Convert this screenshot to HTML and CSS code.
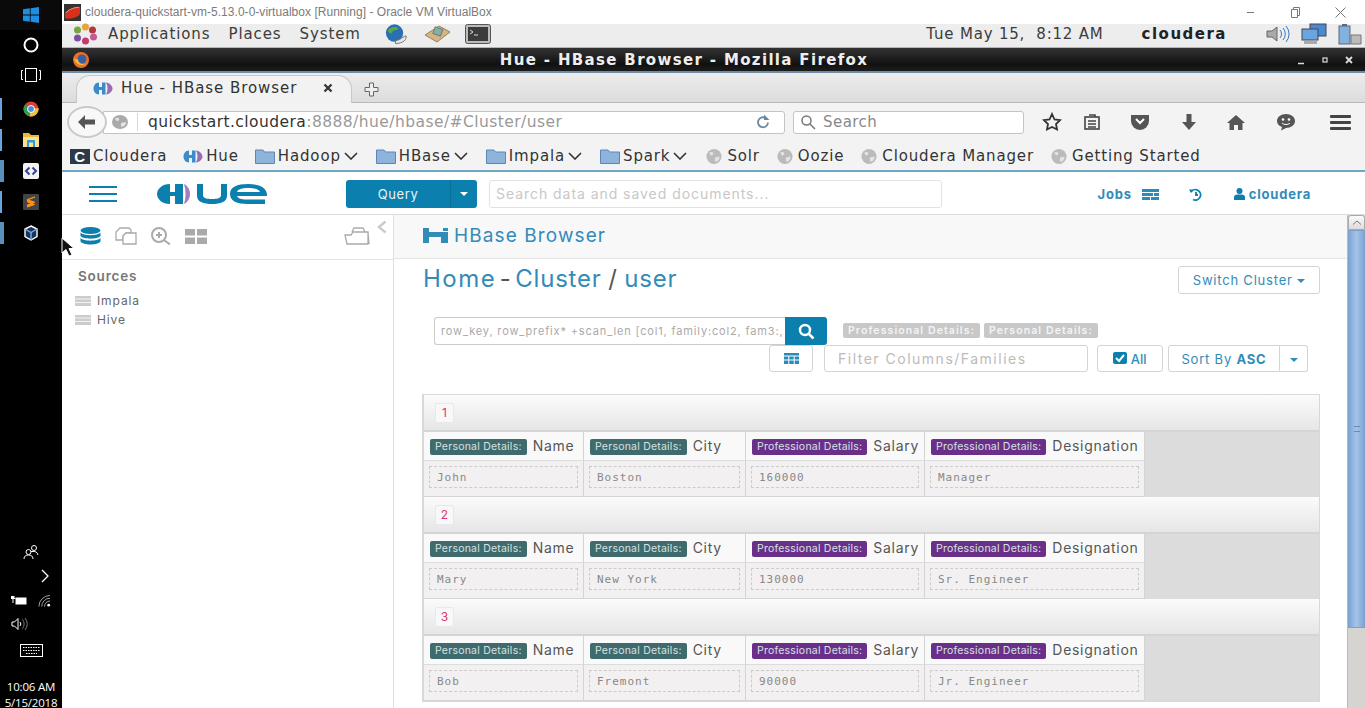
FILE: index.html
```html
<!DOCTYPE html>
<html lang="en">
<head>
  <meta charset="UTF-8">
  <title>Hue - HBase Browser</title>
  <link rel="stylesheet" href="styles.css">
</head>
<body>
  <aside class="taskbar">
    <div class="start">
      <svg width="16" height="16" viewBox="0 0 16 16"><path fill="#1e8ee0" d="M0 2.300 6.800 1.300V7.500H0zM7.600 1.200 16 0V7.500H7.600zM0 8.400H6.800V14.700L0 13.700zM7.600 8.400H16V16L7.600 14.800z"/></svg>
    </div>
    <div class="tb-icon">
      <svg width="16" height="16" viewBox="0 0 16 16"><circle cx="8" cy="8" r="6.500" fill="none" stroke="#fff" stroke-width="2"/></svg>
    </div>
    <div class="tb-icon">
      <svg width="22" height="16" viewBox="0 0 22 16" fill="none" stroke="#fff"><rect x="5.500" y="1.500" width="11" height="13"/><path d="M3 3.500H1.500V12.500H3M19 3.500H20.500V12.500H19"/></svg>
    </div>
    <div class="tb-icon running first-app">
      <svg width="16" height="16" viewBox="0 0 16 16"><circle cx="8" cy="8" r="7.500" fill="#d9402f"/><path d="M8 8 1.500 4.200A7.500 7.500 0 0 0 6.500 15.300z" fill="#2e9e4a"/><path d="M8 8 15.500 7A7.500 7.500 0 0 1 6.500 15.300z" fill="#f3c22d"/><circle cx="8" cy="8" r="3.500" fill="#4b8fe0" stroke="#fff"/></svg>
    </div>
    <div class="tb-icon running">
      <svg width="16" height="16" viewBox="0 0 16 16"><path fill="#e8b93e" d="M0 1H6L8 3H16V5H0z"/><path fill="#fbe18c" d="M0 5H16V15H0z"/><path fill="#2e9be0" d="M4 8H12V15H10V10.500H6V15H4z"/></svg>
    </div>
    <div class="tb-icon running wide">
      <svg width="16" height="16" viewBox="0 0 16 16"><rect width="16" height="16" rx="2" fill="#f2f2f2"/><path d="M6.500 4.500 3 8 6.500 11.500M9.500 4.500 13 8 9.500 11.500" fill="none" stroke="#3b3f9e" stroke-width="2"/></svg>
    </div>
    <div class="tb-icon running">
      <svg width="16" height="16" viewBox="0 0 16 16"><rect width="16" height="16" rx="1" fill="#444"/><path d="M12 3 4.500 5.500V8L11.500 10.500 4.500 13V10.800L11.500 8.500V8L4.500 5.800z" fill="#f7931e" stroke="#f7931e"/></svg>
    </div>
    <div class="tb-icon running wide">
      <svg width="14" height="16" viewBox="0 0 14 16" fill="#17325e" stroke="#fff" stroke-width="1.400"><path d="M7 1 13 4V11.500L7 15 1 11.500V4z"/><path d="M1 4 7 7.500 13 4M7 7.500V15" fill="none" stroke="#7fb0e8"/></svg>
    </div>
    <div class="tray">
      <svg class="tray-people" width="16" height="16" viewBox="0 0 16 16" fill="none" stroke="#fff"><circle cx="5.500" cy="8" r="2.500"/><circle cx="11" cy="4" r="2.500"/><path d="M1 15C1 12 3 11 5.500 11S10 12 10 15M8 7.500 9 7.500C12 7 14.500 8 15 11"/></svg>
      <svg class="tray-chevron" width="10" height="14" viewBox="0 0 10 14" fill="none" stroke="#fff" stroke-width="1.300"><path d="M2 1 8 7 2 13"/></svg>
      <div class="tray-pair">
        <svg width="16" height="12" viewBox="0 0 16 12"><path d="M0 1H3.500V3H4.500V4H2.500V8H1.500V4H0z" fill="#fff"/><rect x="4.500" y="2.500" width="11" height="7" fill="#fff"/></svg>
        <svg width="13" height="14" viewBox="0 0 14 14" fill="none" stroke="#aaa"><path d="M1 13A12 12 0 0 1 13 1M4 13A9 9 0 0 1 13 4M7 13A6 6 0 0 1 13 7"/><circle cx="11.500" cy="11.500" r="1.500" fill="#fff" stroke="none"/></svg>
      </div>
      <svg class="tray-sound" width="17" height="14" viewBox="0 0 17 14" fill="none" stroke="#fff"><path d="M1 5H3.500L7 1.500V12.500L3.500 9H1z"/><path d="M9 5A3 3 0 0 1 9 9"/><path d="M11.500 2.500A7 7 0 0 1 11.500 11.500M14 1A10 10 0 0 1 14 13" stroke="#777"/></svg>
      <svg class="tray-keyboard" width="23" height="13" viewBox="0 0 23 13" fill="none" stroke="#fff"><rect x=".5" y=".5" width="22" height="12"/><path d="M3 3.500H20M3 6.500H20M6 9.500H17" stroke-dasharray="1.500 1"/></svg>
      <div class="clock">10:06 AM<br>5/15/2018</div>
    </div>
  </aside>

  <div class="vm">
    <div class="vm-title">
      <svg width="17" height="17" viewBox="0 0 17 17"><rect width="17" height="17" fill="#333"/><path d="M1 10C1 6 12 2 16 3V9C16 13 5 16 1 14z" fill="#d9301e"/><path d="M2 9C5 5 12 3 15 3.500" stroke="#f59a7a" fill="none"/></svg>
      <span>cloudera-quickstart-vm-5.13.0-0-virtualbox [Running] - Oracle VM VirtualBox</span>
      <div class="vm-buttons">
        <svg width="10" height="10" viewBox="0 0 10 10" stroke="#777"><path d="M2 5.500H9"/></svg>
        <svg width="10" height="11" viewBox="0 0 10 11" fill="none" stroke="#777"><path d="M1.500 2.500H7.500V10.500H1.500zM3.500 2.500V.5H9.500V8.500H7.500"/></svg>
        <svg width="11" height="11" viewBox="0 0 11 11" stroke="#777"><path d="M.5.5 10.500 10.500M10.500.5.5 10.500"/></svg>
      </div>
    </div>

    <div class="gnome-panel">
      <svg width="27" height="22" viewBox="0 0 26 22">
        <circle cx="13" cy="4" r="3.500" fill="#e8a33d"/><circle cx="20" cy="7" r="3.500" fill="#b33a3a"/><circle cx="21" cy="14" r="3.500" fill="#c25a9a"/><circle cx="13" cy="18" r="3.500" fill="#c23b6a"/><circle cx="5" cy="15" r="3.500" fill="#7a4fa3"/><circle cx="5" cy="7" r="3.500" fill="#7aa53d"/>
      </svg>
      <span class="panel-item">Applications</span>
      <span class="panel-item">Places</span>
      <span class="panel-item">System</span>
      <svg class="launcher" width="27" height="22" viewBox="0 0 28 22"><circle cx="13" cy="10" r="9" fill="#2a6fb0"/><path d="M6 7C9 3 15 3 17 5 15 8 12 6 10 10 8 11 7 9 6 7z" fill="#5aa848"/><path d="M14 21C18 21 26 19 25 13 22 13 20 17 14 18z" fill="#e6e6e6" stroke="#777"/></svg>
      <svg class="launcher" width="28" height="22" viewBox="0 0 28 22"><path d="M2 12 16 3 27 9 14 19z" fill="#d4b483" stroke="#9a8257"/><rect x="11" y="5" width="8" height="7" fill="#7fb2a5" stroke="#777" transform="rotate(20 15 8)"/></svg>
      <svg class="launcher" width="26" height="20" viewBox="0 0 26 20"><rect x=".5" y=".5" width="25" height="19" rx="2" fill="#bbb" stroke="#555"/><rect x="3" y="3" width="20" height="14" fill="#3c3c3c"/><path d="M5 6 8 8 5 10M9 11H13" stroke="#ddd" fill="none"/></svg>
      <span class="panel-clock">Tue May 15,&nbsp; 8:12 AM</span>
      <span class="panel-user">cloudera</span>
      <svg width="30" height="20" viewBox="0 0 30 20" fill="none"><path d="M3 7H8L13 3V17L8 13H3z" fill="#aaa" stroke="#666"/><path d="M16 6A6 6 0 0 1 16 14M19 4A9 9 0 0 1 19 16M22 2A12 12 0 0 1 22 18" stroke="#3a78c2"/></svg>
      <svg class="panel-net" width="28" height="22" viewBox="0 0 28 22"><rect x="10" y="1" width="16" height="12" fill="#4a8bd0" stroke="#445"/><rect x="2" y="6" width="16" height="11" fill="#6aa5e0" stroke="#445"/><rect x="4" y="18" width="13" height="3" fill="#aaa"/></svg>
      <svg class="panel-batt" width="26" height="22" viewBox="0 0 26 22"><rect x="2" y="3" width="11" height="18" fill="#7fb2e0" stroke="#667"/><rect x="5" y="1" width="5" height="2" fill="#667"/><path d="M14 12H24V21H14z" fill="#bbb" stroke="#777"/></svg>
    </div>

    <div class="ff-title">
      <svg width="18" height="18" viewBox="0 0 18 18"><circle cx="9" cy="9" r="8" fill="#e8702a"/><circle cx="10" cy="8" r="4.500" fill="#3a5f9e"/><path d="M2 7C3 13 9 16 14 13 10 14 6 12 6 8 4 9 3 8 2 7z" fill="#f6b73c"/></svg>
      <span class="ff-name">Hue - HBase Browser - Mozilla Firefox</span>
      <div class="ff-buttons">
        <svg width="10" height="10" viewBox="0 0 10 10"><path d="M2 8.500H8" stroke="#ddd" stroke-width="1.500"/></svg>
        <svg width="10" height="10" viewBox="0 0 10 10"><rect x="3" y="3" width="4" height="4" fill="none" stroke="#ddd" stroke-width="1.200"/></svg>
        <svg width="10" height="10" viewBox="0 0 10 10"><path d="M2 2 8 8M8 2 2 8" stroke="#ddd" stroke-width="1.800"/></svg>
      </div>
    </div>

    <div class="ff-tabs">
      <div class="tab">
        <svg class="hue-mark" width="20" height="13" viewBox="0 0 20 13"><path d="M6 .5C2.500.5.5 3.500.5 6.500S2.500 12.500 6 12.500V.5z" fill="#3a8ccc"/><path d="M6 5H9V8H6zM9 .5H12.500V12.500H9z" fill="#3a8ccc"/><path d="M13 .5C17 1 19.500 4 19.500 6.500S17 12 13 12.500C15 9 15 4 13 .5z" fill="#9a6cb5"/></svg>
        <span>Hue - HBase Browser</span>
        <svg class="tab-close" width="10" height="10" viewBox="0 0 10 10"><path d="M1.500 1.500 8.500 8.500M8.500 1.500 1.500 8.500" stroke="#333" stroke-width="2.200"/></svg>
      </div>
      <svg class="new-tab" width="15" height="15" viewBox="0 0 15 15"><path d="M5.500 1H9.500V5.500H14V9.500H9.500V14H5.500V9.500H1V5.500H5.500z" fill="#eee" stroke="#666"/></svg>
    </div>

    <div class="ff-nav">
      <div class="back-btn">
        <svg width="20" height="16" viewBox="0 0 20 16"><path d="M8 1 1 8 8 15V10.500H18V5.500H8z" fill="#555"/></svg>
      </div>
      <div class="urlbar">
        <svg width="18" height="16" viewBox="0 0 18 18" preserveAspectRatio="none"><circle cx="9" cy="9" r="8" fill="#aaa"/><path d="M4 5C7 3 9 5 8 7 6 9 5 7 4 5zM10 10 15 9C15 13 12 15 10 14z" fill="#e4e4e4"/></svg>
        <span class="url"><span class="url-host">quickstart.cloudera</span>:8888/hue/hbase/#Cluster/user</span>
        <svg class="reload" width="16" height="16" viewBox="0 0 16 16" fill="none" stroke="#6c86a0" stroke-width="1.800"><path d="M13 8.500A5 5 0 1 1 9.500 3.500"/><path d="M9 .5V6H14.500z" fill="#6c86a0" stroke="none"/></svg>
      </div>
      <div class="ff-search">
        <svg width="16" height="16" viewBox="0 0 16 16" fill="none" stroke="#777" stroke-width="1.500"><circle cx="6.500" cy="6.500" r="4.500"/><path d="M10 10 15 15"/></svg>
        <span>Search</span>
      </div>
      <div class="nav-icons">
        <svg class="nav-star" width="20" height="20" viewBox="0 0 20 20" fill="none" stroke="#333" stroke-width="1.800"><path d="M10 2 12.500 7.500 18 8.200 14 12 15 17.500 10 15 5 17.500 6 12 2 8.200 7.500 7.500z"/></svg>
        <svg class="nav-clip" width="18" height="18" viewBox="0 0 18 18" fill="none" stroke="#444" stroke-width="1.600"><rect x="2" y="4" width="14" height="12"/><path d="M6 2H12V4M5 8H13M5 11H13M5 14H13"/></svg>
        <svg width="22" height="18" viewBox="0 0 20 18"><path d="M1 2H19V8A9 9 0 0 1 1 8z" fill="#555"/><path d="M6 6 10 10 14 6" fill="none" stroke="#fff" stroke-width="2"/></svg>
        <svg width="18" height="18" viewBox="0 0 18 18"><path d="M6.500 1H11.500V9H16L9 17 2 9H6.500z" fill="#555"/></svg>
        <svg width="20" height="18" viewBox="0 0 18 18"><path d="M9 2 18 10H15.500V17H11V12H7V17H2.500V10H0z" fill="#555"/></svg>
        <svg width="22" height="18" viewBox="0 0 20 18"><path d="M10 1C15 1 19 4 19 8S15 15 10 15L5 17.500 6 14C3 13 1 11 1 8 1 4 5 1 10 1z" fill="#555"/><circle cx="7" cy="6.500" r="1.300" fill="#fff"/><circle cx="13" cy="6.500" r="1.300" fill="#fff"/><path d="M6 10C8 12 12 12 14 10" stroke="#fff" fill="none"/></svg>
      </div>
      <div class="menu-btn"><i></i><i></i><i></i></div>
    </div>

    <div class="ff-bookmarks">
      <span class="bm"><b class="bm-c">C</b>Cloudera</span>
      <span class="bm"><svg width="20" height="13" viewBox="0 0 20 13"><path d="M6 .5C2.500.5.5 3.500.5 6.500S2.500 12.500 6 12.500V.5z" fill="#3a8ccc"/><path d="M6 5H9V8H6zM9 .5H12.500V12.500H9z" fill="#3a8ccc"/><path d="M13 .5C17 1 19.500 4 19.500 6.500S17 12 13 12.500C15 9 15 4 13 .5z" fill="#9a6cb5"/></svg>Hue</span>
      <span class="bm"><svg class="folder" viewBox="0 0 20 16"><path d="M.5 2H8L9.500 4H19.500V15.500H.5z" fill="#8fb4dc" stroke="#5d86b3"/></svg>Hadoop<svg class="chev" viewBox="0 0 14 8"><path d="M1 1 7 7 13 1" fill="none" stroke="#333" stroke-width="1.600"/></svg></span>
      <span class="bm"><svg class="folder" viewBox="0 0 20 16"><path d="M.5 2H8L9.500 4H19.500V15.500H.5z" fill="#8fb4dc" stroke="#5d86b3"/></svg>HBase<svg class="chev" viewBox="0 0 14 8"><path d="M1 1 7 7 13 1" fill="none" stroke="#333" stroke-width="1.600"/></svg></span>
      <span class="bm"><svg class="folder" viewBox="0 0 20 16"><path d="M.5 2H8L9.500 4H19.500V15.500H.5z" fill="#8fb4dc" stroke="#5d86b3"/></svg>Impala<svg class="chev" viewBox="0 0 14 8"><path d="M1 1 7 7 13 1" fill="none" stroke="#333" stroke-width="1.600"/></svg></span>
      <span class="bm"><svg class="folder" viewBox="0 0 20 16"><path d="M.5 2H8L9.500 4H19.500V15.500H.5z" fill="#8fb4dc" stroke="#5d86b3"/></svg>Spark<svg class="chev" viewBox="0 0 14 8"><path d="M1 1 7 7 13 1" fill="none" stroke="#333" stroke-width="1.600"/></svg></span>
      <span class="bm"><svg class="globe" viewBox="0 0 18 18"><circle cx="9" cy="9" r="8" fill="#bbb"/><path d="M4 5C7 3 9 5 8 7 6 9 5 7 4 5zM10 10 15 9C15 13 12 15 10 14z" fill="#e4e4e4"/></svg>Solr</span>
      <span class="bm"><svg class="globe" viewBox="0 0 18 18"><circle cx="9" cy="9" r="8" fill="#bbb"/><path d="M4 5C7 3 9 5 8 7 6 9 5 7 4 5zM10 10 15 9C15 13 12 15 10 14z" fill="#e4e4e4"/></svg>Oozie</span>
      <span class="bm"><svg class="globe" viewBox="0 0 18 18"><circle cx="9" cy="9" r="8" fill="#bbb"/><path d="M4 5C7 3 9 5 8 7 6 9 5 7 4 5zM10 10 15 9C15 13 12 15 10 14z" fill="#e4e4e4"/></svg>Cloudera Manager</span>
      <span class="bm"><svg class="globe" viewBox="0 0 18 18"><circle cx="9" cy="9" r="8" fill="#bbb"/><path d="M4 5C7 3 9 5 8 7 6 9 5 7 4 5zM10 10 15 9C15 13 12 15 10 14z" fill="#e4e4e4"/></svg>Getting Started</span>
    </div>

    <header class="hue-nav">
      <div class="hamburger"><i></i><i></i><i></i></div>
      <svg class="hue-logo" width="110" height="22" viewBox="0 0 110 22">
        <path d="M13 1C5 1 0 6 0 11S5 21 13 21z" fill="#0b7fad"/>
        <path d="M13 9H18V13H13zM18 1H26V21H18z" fill="#0b7fad"/>
        <path d="M27 1C31 3 33 7 33 11S31 19 27 21C29 15 29 7 27 1z" fill="#a87bc0"/>
        <path d="M40 1H46V12C46 15.500 50 16 55 16S64 15.500 64 12V1H70V13C70 19 63 21 55 21S40 19 40 13z" fill="#0b7fad"/>
        <path d="M91 1C103 1 110 5 110 12V13H80C81 16 86 16.500 92 16.500H108V21H91C80 21 73 18 73 11S80 1 91 1zM80 9H103C102 6 97 5 91 5S81 6 80 9z" fill="#0b7fad"/>
      </svg>
      <div class="query-btn"><span class="query-label">Query</span><span class="query-caret"><i class="caret"></i></span></div>
      <div class="global-search">Search data and saved documents...</div>
      <div class="hue-right">
        <span class="jobs">Jobs
          <svg width="17" height="11" viewBox="0 0 17 11" fill="#2a8ab8"><path d="M0 0H17V3H0zM0 4H11V7H0zM12 4H17V7H12zM0 8H8V11H0zM9 8H17V11H9z"/></svg>
        </span>
        <svg class="history" width="15" height="13" viewBox="0 0 15 13" fill="none" stroke="#0b7fad" stroke-width="1.800"><path d="M3 4A5.200 5.200 0 1 1 5 11.500"/><path d="M1 1.500 5 1.500 3 5z" fill="#0b7fad" stroke="none"/><path d="M8 4V7H10"/></svg>
        <span class="user"><svg width="11" height="12" viewBox="0 0 11 12" fill="#0b7fad"><circle cx="5.500" cy="3" r="3"/><path d="M0 12V9C0 7 2 6.500 5.500 6.500S11 7 11 9V12z"/></svg> cloudera</span>
      </div>
    </header>

    <div class="hue-body">
      <nav class="assist">
        <div class="assist-tabs">
          <svg width="21" height="18" viewBox="0 0 21 18" fill="#0b7fad"><ellipse cx="10.500" cy="3.500" rx="10" ry="3.500"/><path d="M.5 5.500C3 9 18 9 20.500 5.500V9C18 12.500 3 12.500.5 9zM.5 11C3 14.500 18 14.500 20.500 11V14.500C18 18.500 3 18.500.5 14.500z"/></svg>
          <svg width="23" height="18" viewBox="0 0 23 18" fill="none" stroke="#aaa" stroke-width="1.300"><path d="M6 1H15L17 3V6H12L9 9V13H2V5z"/><path d="M12 6H22V17H9V9z" fill="#fff"/></svg>
          <svg width="22" height="18" viewBox="0 0 22 18" fill="none" stroke="#aaa" stroke-width="2"><circle cx="9" cy="8" r="7"/><path d="M14 13 20 17.500M9 5V11M6 8H12"/></svg>
          <svg width="22" height="15" viewBox="0 0 22 15" fill="#aaa"><path d="M0 0H10V6.500H0zM12 0H22V6.500H12zM0 8.500H10V15H0zM12 8.500H22V15H12z"/></svg>
          <svg class="assist-folder" width="26" height="18" viewBox="0 0 26 18" fill="none" stroke="#aaa" stroke-width="1.300"><path d="M3 17 1 8H7L9 5H15L24 5V17zM8 5 10 1H19L21 5M24 5 25 17"/></svg>
        </div>
        <svg class="assist-collapse" width="10" height="14" viewBox="0 0 10 14" fill="none" stroke="#ccc" stroke-width="2.500"><path d="M8.500 1.500 2 7 8.500 12.500"/></svg>
        <div class="sources">
          <h3>Sources</h3>
          <div class="source"><svg class="db" viewBox="0 0 16 10"><path d="M0 0H16V10H0z" fill="#ccc"/><path d="M0 3H16M0 6.500H16" stroke="#f4f4f4"/></svg>Impala</div>
          <div class="source"><svg class="db" viewBox="0 0 16 10"><path d="M0 0H16V10H0z" fill="#ccc"/><path d="M0 3H16M0 6.500H16" stroke="#f4f4f4"/></svg>Hive</div>
        </div>
      </nav>

      <main class="content">
        <div class="app-header">
          <svg width="25" height="15" viewBox="0 0 25 15" fill="#338bb8"><path d="M0 0H6V4H25V15H18V9H6V15H0zM20 0H25V3H20z"/></svg>
          <span>HBase Browser</span>
        </div>
        <div class="page">
          <div class="page-head">
            <h1><a class="home">Home</a> <em class="dash">-</em> <a>Cluster</a> <em class="slash">/</em> <a>user</a></h1>
            <button class="btn switch">Switch Cluster <i class="caret blue"></i></button>
          </div>

          <div class="search-row">
            <div class="row-search">row_key, row_prefix* +scan_len [col1, family:col2, fam3:,</div>
            <div class="row-search-btn">
              <svg width="17" height="17" viewBox="0 0 17 17" fill="none" stroke="#fff" stroke-width="2.500"><circle cx="7" cy="7" r="5"/><path d="M11 11 15.500 15.500"/></svg>
            </div>
            <div class="fam-tags"><span>Professional Details:</span><span>Personal Details:</span></div>
          </div>

          <div class="tool-row">
            <button class="btn grid-btn">
              <svg width="15" height="11" viewBox="0 0 15 11" fill="#2a8ab8"><path d="M0 0H15V2.500H0zM0 3.500H4.300V6.500H0zM5.300 3.500H9.700V6.500H5.300zM10.700 3.500H15V6.500H10.700zM0 7.500H4.300V11H0zM5.300 7.500H9.700V11H5.300zM10.700 7.500H15V11H10.700z"/></svg>
            </button>
            <div class="filter">Filter Columns/Families</div>
            <button class="btn all"><svg width="14" height="12" viewBox="0 0 14 12"><rect width="14" height="12" rx="2" fill="#0b7fad"/><path d="M3 6 6 9 11 3" fill="none" stroke="#fff" stroke-width="2"/></svg> All</button>
            <div class="split">
              <button class="btn sort">Sort By <b>ASC</b></button>
              <button class="btn sort-caret"><i class="caret blue"></i></button>
            </div>
          </div>

          <section class="results">
            <div class="row-head"><span class="row-key">1</span></div>
            <div class="cells">
              <div class="cell"><div class="cell-name"><span class="tag personal">Personal Details:</span> <span class="qual">Name</span></div><div class="cell-val"><span>John</span></div></div>
              <div class="cell"><div class="cell-name"><span class="tag personal">Personal Details:</span> <span class="qual">City</span></div><div class="cell-val"><span>Boston</span></div></div>
              <div class="cell"><div class="cell-name"><span class="tag pro">Professional Details:</span> <span class="qual">Salary</span></div><div class="cell-val"><span>160000</span></div></div>
              <div class="cell"><div class="cell-name"><span class="tag pro">Professional Details:</span> <span class="qual">Designation</span></div><div class="cell-val"><span>Manager</span></div></div>
            </div>
            <div class="row-head"><span class="row-key">2</span></div>
            <div class="cells">
              <div class="cell"><div class="cell-name"><span class="tag personal">Personal Details:</span> <span class="qual">Name</span></div><div class="cell-val"><span>Mary</span></div></div>
              <div class="cell"><div class="cell-name"><span class="tag personal">Personal Details:</span> <span class="qual">City</span></div><div class="cell-val"><span>New York</span></div></div>
              <div class="cell"><div class="cell-name"><span class="tag pro">Professional Details:</span> <span class="qual">Salary</span></div><div class="cell-val"><span>130000</span></div></div>
              <div class="cell"><div class="cell-name"><span class="tag pro">Professional Details:</span> <span class="qual">Designation</span></div><div class="cell-val"><span>Sr. Engineer</span></div></div>
            </div>
            <div class="row-head"><span class="row-key">3</span></div>
            <div class="cells">
              <div class="cell"><div class="cell-name"><span class="tag personal">Personal Details:</span> <span class="qual">Name</span></div><div class="cell-val"><span>Bob</span></div></div>
              <div class="cell"><div class="cell-name"><span class="tag personal">Personal Details:</span> <span class="qual">City</span></div><div class="cell-val"><span>Fremont</span></div></div>
              <div class="cell"><div class="cell-name"><span class="tag pro">Professional Details:</span> <span class="qual">Salary</span></div><div class="cell-val"><span>90000</span></div></div>
              <div class="cell"><div class="cell-name"><span class="tag pro">Professional Details:</span> <span class="qual">Designation</span></div><div class="cell-val"><span>Jr. Engineer</span></div></div>
            </div>
          </section>
        </div>
        <div class="scrollbar">
          <div class="scroll-up"><svg width="10" height="5" viewBox="0 0 10 5" fill="none" stroke="#777"><path d="M1 4.500 5 1 9 4.500"/></svg></div>
          <div class="scroll-thumb"><i></i></div>
        </div>
      </main>
    </div>
  </div>

  <svg class="cursor" width="15" height="20" viewBox="0 0 15 20"><path d="M1 1V16L5 12.500 8 19 11 18 8 11.500H13z" fill="#111" stroke="#fff"/></svg>
</body>
</html>
```
FILE: styles.css
```css
* {
  box-sizing: border-box;
}
html, body {
  margin: 0;
  height: 708px;
  overflow: hidden;
}
body {
  display: flex;
  font-family: "DejaVu Sans", sans-serif;
  background: #fff;
  color: #333;
}

/* windows taskbar */
.taskbar {
  width: 62px;
  flex: none;
  background: #000;
  display: flex;
  flex-direction: column;
  align-items: center;
}
.start {
  width: 100%;
  height: 30px;
  background: #0a0a0a;
  display: flex;
  align-items: center;
  justify-content: center;
}
.tb-icon {
  width: 100%;
  height: 30px;
  display: flex;
  align-items: center;
  justify-content: center;
  position: relative;
}
.tb-icon.running {
  height: 31px;
}
.tb-icon.first-app {
  margin-top: 3px;
}
.tb-icon.running::before {
  content: "";
  position: absolute;
  left: 0;
  top: 5px;
  bottom: 4px;
  width: 2px;
  background: #6aa6dd;
}
.tb-icon.wide::before {
  width: 4px;
  background: #5b8fc0;
}
.tray {
  margin-top: auto;
  width: 100%;
  display: flex;
  flex-direction: column;
  align-items: center;
}
.tray-people {
  margin-bottom: 9px;
}
.tray-chevron {
  margin-left: 27px;
  margin-bottom: 11px;
}
.tray-pair {
  display: flex;
  gap: 11px;
  align-items: center;
  height: 14px;
  margin-bottom: 9px;
}
.tray-sound {
  margin-right: 24px;
  margin-bottom: 13px;
}
.tray-keyboard {
  margin-bottom: 22px;
}
.clock {
  font: 11.500px/16px "Open Sans", sans-serif;
  letter-spacing: -.2px;
  color: #fff;
  text-align: center;
  white-space: nowrap;
  height: 29px;
}

/* vm window */
.vm {
  flex: 1;
  min-width: 0;
  display: flex;
  flex-direction: column;
}
.vm-title {
  height: 24px;
  display: flex;
  align-items: center;
  gap: 4px;
  padding: 0 19px 0 2px;
  font: 12px "Liberation Sans", sans-serif;
  color: #7b7b7b;
  letter-spacing: .03px;
}
.vm-buttons {
  margin-left: auto;
  display: flex;
  gap: 35px;
}
.gnome-panel {
  height: 24px;
  background: #ededed;
  border-bottom: 1px solid #b5b5b5;
  display: flex;
  align-items: center;
  padding: 0 2px 3px 10px;
  font-size: 15px;
  color: #3c3c3c;
}
.gnome-panel svg {
  flex: none;
}
.panel-item {
  margin-left: 18px;
  letter-spacing: .9px;
}
.panel-item:first-of-type {
  margin-left: 9px;
}
.launcher {
  margin-left: 14px;
}
.panel-item + .launcher {
  margin-left: 21px;
}
.panel-clock {
  margin-left: auto;
  letter-spacing: .8px;
}
.panel-user {
  margin-left: 38px;
  margin-right: 37px;
  font-weight: bold;
  color: #222;
  letter-spacing: 1.500px;
}
.panel-net {
  margin-left: 6px;
}
.panel-batt {
  margin-left: 9px;
}
.ff-title {
  height: 25px;
  background: linear-gradient(#333, #111 70%, #1c1c1c);
  border-bottom: 2px solid #6f8ba3;
  display: flex;
  align-items: center;
  padding: 0 11px 0 10px;
  position: relative;
  color: #eee;
}
.ff-name {
  flex: 1;
  text-align: center;
  font-size: 15px;
  font-weight: bold;
  letter-spacing: 1.340px;
  margin-left: -18px;
}
.ff-buttons {
  display: flex;
  gap: 14px;
}
.ff-tabs {
  height: 30px;
  background: linear-gradient(#ececec, #dcdcdc);
  border-bottom: 1px solid #b8b8b8;
  display: flex;
  align-items: flex-end;
  padding-left: 14px;
}
.tab {
  width: 276px;
  height: 28px;
  background: #f2f2f2;
  border: 1px solid #c8c8c8;
  border-bottom: 0;
  border-radius: 14px 14px 0 0;
  display: flex;
  align-items: center;
  padding: 0 18px 3px 16px;
  font-size: 15px;
  color: #333;
  letter-spacing: .95px;
  margin-bottom: -1px;
}
.hue-mark {
  margin-right: 8px;
}
.tab-close {
  margin-left: auto;
}
.new-tab {
  margin: 0 0 5px 12px;
}
.ff-nav {
  height: 39px;
  background: #f3f3f3;
  display: flex;
  align-items: center;
  padding: 0 14px 1px 5px;
}
.back-btn {
  width: 40px;
  height: 32px;
  border: 2px solid #c9c9c9;
  border-radius: 50%;
  background: #f8f8f8;
  display: flex;
  align-items: center;
  justify-content: center;
  margin-right: -4px;
  position: relative;
}
.urlbar {
  width: 682px;
  height: 23px;
  background: #fff;
  border: 1px solid #c4c4c4;
  border-radius: 0 3px 3px 0;
  display: flex;
  align-items: center;
  padding: 0 13px 0 7px;
  font-size: 15.500px;
  letter-spacing: .44px;
}
.url {
  color: #999;
  margin-left: 8px;
  padding-left: 10px;
  border-left: 1px solid #d6d6d6;
  line-height: 18px;
}
.url-host {
  color: #333;
}
.reload {
  margin-left: auto;
}
.ff-search {
  width: 231px;
  height: 23px;
  margin-left: 8px;
  background: #fff;
  border: 1px solid #c4c4c4;
  border-radius: 3px;
  display: flex;
  align-items: center;
  gap: 7px;
  padding-left: 6px;
  font-size: 15px;
  color: #888;
  letter-spacing: .45px;
}
.nav-icons {
  display: flex;
  align-items: center;
  gap: 28.500px;
  margin-left: 18px;
}
.nav-star {
  margin-right: -8px;
}
.menu-btn {
  margin-left: auto;
  width: 21px;
  display: flex;
  flex-direction: column;
  gap: 3px;
}
.menu-btn i {
  height: 3px;
  background: #444;
  border-radius: 1px;
}
.ff-bookmarks {
  height: 30px;
  background: #f3f3f3;
  display: flex;
  align-items: center;
  gap: 16px;
  padding-left: 8px;
  font-size: 15px;
  letter-spacing: .85px;
  color: #333;
  border-bottom: 2px solid #6fa8c4;
}
.bm {
  display: flex;
  align-items: center;
  gap: 3px;
  white-space: nowrap;
}
.bm-c {
  width: 20px;
  height: 15px;
  background: #2b3a46;
  color: #fff;
  font: bold 15px/15px "Liberation Sans", sans-serif;
  text-align: center;
}
.folder {
  width: 20px;
  height: 16px;
}
.chev {
  width: 14px;
  height: 8px;
  margin-right: 2px;
}
.globe {
  width: 18px;
  height: 17px;
  margin-right: 1px;
}

/* hue */
.hue-nav {
  height: 43px;
  display: flex;
  align-items: center;
  border-bottom: 1px solid #dcdcdc;
  padding: 2px 0 0 27px;
  font-family: Inter, sans-serif;
}
.hamburger {
  width: 28px;
  display: flex;
  flex-direction: column;
  gap: 5px;
}
.hamburger i {
  height: 2px;
  background: #0b7fad;
}
.hue-logo {
  margin-left: 40px;
}
.query-btn {
  margin-left: 79px;
  width: 131px;
  height: 28px;
  background: #0b7fad;
  border-radius: 3px;
  display: flex;
  color: #fff;
  font-size: 13px;
  letter-spacing: .6px;
}
.query-label {
  flex: 1;
  text-align: center;
  line-height: 28px;
  opacity: .9;
}
.query-caret {
  width: 27px;
  border-left: 1px solid #0a6f96;
  display: flex;
  align-items: center;
  justify-content: center;
}
.caret {
  display: inline-block;
  border-left: 4px solid transparent;
  border-right: 4px solid transparent;
  border-top: 4px solid #fff;
  vertical-align: middle;
}
.caret.blue {
  border-top-color: #338bb8;
}
.global-search {
  margin-left: 12px;
  width: 453px;
  height: 28px;
  border: 1px solid #e2e2e2;
  border-radius: 3px;
  padding-left: 6px;
  font-size: 14px;
  line-height: 26px;
  color: #c8c8c8;
  letter-spacing: .95px;
}
.hue-right {
  margin-left: auto;
  margin-right: 54px;
  display: flex;
  align-items: center;
  font-size: 13px;
  font-weight: 700;
  color: #338bb8;
  letter-spacing: .8px;
}
.jobs {
  display: flex;
  align-items: center;
  gap: 10px;
}
.history {
  margin-left: 29px;
}
.user {
  margin-left: 31px;
  display: flex;
  align-items: center;
  gap: 4px;
}
.hue-body {
  flex: 1;
  min-height: 0;
  display: flex;
  font-family: Inter, sans-serif;
}
.assist {
  width: 332px;
  flex: none;
  border-right: 1px solid #e0e0e0;
  position: relative;
}
.assist-tabs {
  height: 45px;
  border-bottom: 1px solid #e4e4e4;
  display: flex;
  align-items: center;
  gap: 13px;
  padding: 0 23px 2px 18px;
}
.assist-folder {
  margin-left: auto;
}
.assist-collapse {
  position: absolute;
  top: 5px;
  right: 6px;
}
.sources {
  padding: 8px 0 0 13px;
}
.sources h3 {
  margin: 0 0 7px;
  font-size: 13.500px;
  font-weight: 600;
  color: #777;
  padding-left: 3px;
  letter-spacing: .8px;
}
.source {
  display: flex;
  align-items: center;
  gap: 6px;
  font-size: 12px;
  line-height: 19px;
  color: #666;
  letter-spacing: .9px;
}
.db {
  width: 16px;
  height: 10px;
}
.content {
  flex: 1;
  min-width: 0;
  position: relative;
  overflow: hidden;
}
.app-header {
  height: 44px;
  background: #f8f8f8;
  border-bottom: 1px solid #e4e4e4;
  display: flex;
  align-items: center;
  gap: 6px;
  padding: 0 0 2px 29px;
  font-size: 19px;
  letter-spacing: 1.100px;
  color: #338bb8;
}
.page {
  padding: 0 45px 0 29px;
}
.page-head {
  display: flex;
  align-items: center;
  justify-content: space-between;
  height: 38px;
  margin-bottom: 20px;
}
.page-head h1 {
  margin: 0;
  font-size: 24px;
  font-weight: 400;
  color: #338bb8;
  white-space: nowrap;
  letter-spacing: .8px;
  word-spacing: -3px;
}
.page-head em {
  font-style: normal;
  color: #555;
}
.page-head .home {
  letter-spacing: 1.500px;
}
.page-head .dash {
  margin: 0 -1px;
}
.page-head .slash {
  margin: 0 2px;
}
.btn {
  font-family: inherit;
  background: #fff;
  border: 1px solid #d4d4d4;
  border-radius: 3px;
  color: #338bb8;
  font-size: 13px;
  height: 28px;
  padding: 0;
}
.switch {
  width: 142px;
  margin-top: 3px;
  letter-spacing: .8px;
}
.search-row {
  display: flex;
  align-items: flex-start;
  padding-left: 11px;
  height: 28px;
}
.row-search {
  width: 351px;
  height: 28px;
  border: 1px solid #ccc;
  border-right: 0;
  border-radius: 3px 0 0 3px;
  padding-left: 6px;
  font-size: 11px;
  line-height: 27px;
  color: #aaa;
  white-space: nowrap;
  overflow: hidden;
  letter-spacing: .85px;
}
.row-search-btn {
  width: 42px;
  height: 28px;
  background: #0b7fad;
  border-radius: 0 3px 3px 0;
  display: flex;
  align-items: center;
  justify-content: center;
}
.fam-tags {
  display: flex;
  gap: 4px;
  margin: 6px 0 0 16px;
}
.fam-tags span {
  background: #c8c8c8;
  color: #f4f4f4;
  font-size: 10.500px;
  font-weight: 600;
  line-height: 15px;
  border-radius: 2px;
  padding: 0 5px;
  letter-spacing: 1.100px;
}
.tool-row {
  display: flex;
  height: 27px;
  gap: 9px;
  padding-left: 346px;
  margin-bottom: 22px;
}
.tool-row .btn {
  height: 27px;
}
.grid-btn {
  width: 44px;
  margin-right: 2px;
}
.filter {
  width: 264px;
  height: 27px;
  border: 1px solid #d4d4d4;
  border-radius: 3px;
  padding-left: 13px;
  font-size: 14px;
  line-height: 25px;
  color: #bbb;
  letter-spacing: 1.500px;
}
.all {
  width: 66px;
  font-weight: 500;
}
.split {
  display: flex;
  margin-left: -4px;
}
.sort {
  width: 112px;
  border-radius: 3px 0 0 3px;
  letter-spacing: .8px;
}
.sort-caret {
  width: 28px;
  border-left: 0;
  border-radius: 0 3px 3px 0;
}
.results {
  width: 898px;
  margin-left: -1px;
  background: #dcdcdc;
  border: 1px solid #d8d8d8;
  border-left-width: 2px;
}
.row-head {
  height: 37px;
  background: linear-gradient(#fbfbfb, #e6e6e6);
  border-bottom: 2px solid #d4d4d4;
  padding: 8px 0 0 11px;
}
.row-key {
  display: block;
  width: 19px;
  height: 20px;
  background: #f8f8fa;
  border: 1px solid #e8e8ee;
  border-radius: 2px;
  text-align: center;
  font-size: 12px;
  line-height: 18px;
  color: #e0356b;
}
.cells {
  display: grid;
  grid-template-columns: 160px 162px 179px 220px;
}
.cell {
  border-right: 1px solid #d4d4d4;
  border-bottom: 1px solid #d4d4d4;
}
.cell-name {
  height: 29px;
  background: #f9f9f9;
  border-bottom: 1px solid #dcdcdc;
  padding: 1px 0 0 6px;
  font-size: 14px;
  color: #555;
  white-space: nowrap;
  display: flex;
  align-items: center;
  gap: 6px;
}
.qual {
  letter-spacing: .7px;
  margin-top: -3px;
}
.tag {
  color: #d6e2e2;
  font-size: 10.500px;
  line-height: 16px;
  border-radius: 2px;
  padding: 0 5px;
  letter-spacing: .22px;
}
.personal {
  background: #3f6a6e;
}
.pro {
  background: #6a3089;
}
.cell-val {
  height: 35px;
  background: #f2f0f1;
  padding: 5px 5px;
}
.cell-val span {
  display: block;
  height: 22px;
  border: 1px dashed #ccc;
  padding-left: 7px;
  font: 11px/21px "DejaVu Sans Mono", monospace;
  color: #888;
  letter-spacing: 1px;
}
.scrollbar {
  position: absolute;
  top: 0;
  right: 0;
  bottom: 0;
  width: 18px;
  background: #d6d4d0;
  border-left: 1px solid #bbb;
}
.scroll-up {
  height: 15px;
  background: linear-gradient(#fafafa, #dcdcdc);
  border: 1px solid #aaa;
  border-radius: 3px 3px 0 0;
  display: flex;
  align-items: center;
  justify-content: center;
}
.scroll-thumb {
  height: 398px;
  background: linear-gradient(90deg, #7ea6d8, #a5c3e8 50%, #7ea6d8);
  border: 1px solid #7e9fc9;
  display: flex;
  align-items: center;
  justify-content: center;
}
.scroll-thumb i {
  width: 6px;
  height: 6px;
  border-top: 1px solid #6c8cb8;
  border-bottom: 1px solid #6c8cb8;
}
.cursor {
  position: absolute;
  left: 61px;
  top: 237px;
}
```
